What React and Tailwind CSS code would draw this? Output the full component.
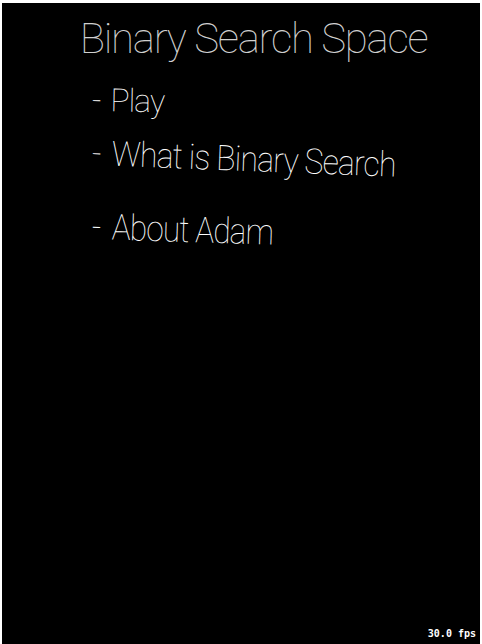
import React from 'react';

// menu lines are drawn slightly tilted, like on the original canvas
const items = [
  { label: 'Play', gap: 'mr-[10px]', cls: 'text-[32px] tracking-[-1px] rotate-[1deg]' },
  { label: 'What is Binary Search', gap: 'mr-[12px]', cls: 'text-[35px] tracking-[-1px] scale-x-[0.92] rotate-[2.2deg] mt-[20px]' },
  { label: 'About Adam', gap: 'mr-[13px]', cls: 'text-[36px] tracking-[-1px] scale-x-[0.88] rotate-[1.8deg] mt-[38px]' },
];

export default function App() {
  return (
    <div className="w-[482px] h-[644px] bg-white pt-[3px] px-[2px]">
      <div
        className="relative h-[641px] bg-black overflow-hidden"
        style={{ fontFamily: 'Roboto, "Liberation Sans", sans-serif' }}
      >
        <h1 className="text-center text-[42px] font-thin text-[#d0d0d0] leading-none pt-[15px] pl-[25px] tracking-[-1.3px]">
          Binary Search Space
        </h1>
        <ul className="pl-[90px] pt-[24px] text-white font-thin">
          {items.map((it) => (
            <li key={it.label} className={`origin-left leading-none ${it.cls}`}>
              <span className={it.gap}>-</span>
              {it.label}
            </li>
          ))}
        </ul>
        <div className="absolute right-[4px] bottom-[5px] text-[10px] font-bold text-white leading-none font-['DejaVu_Sans_Mono',monospace]">
          30.0 fps
        </div>
      </div>
    </div>
  );
}
